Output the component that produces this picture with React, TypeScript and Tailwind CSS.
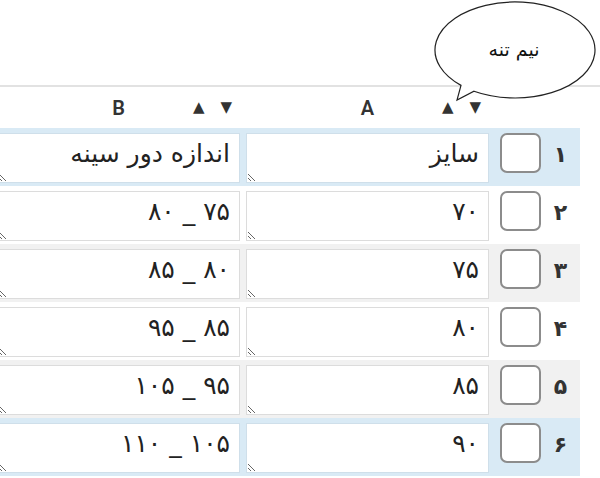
const rows = [
  { n: '۱', a: 'سایز', b: 'اندازه دور سینه', bg: 'bg-[#d9eaf5]', border: 'border-[#cfdfea]' },
  { n: '۲', a: '۷۰', b: '۷۵ _ ۸۰', bg: 'bg-white', border: 'border-[#dcdcdc]' },
  { n: '۳', a: '۷۵', b: '۸۰ _ ۸۵', bg: 'bg-[#f1f1f1]', border: 'border-[#dcdcdc]' },
  { n: '۴', a: '۸۰', b: '۸۵ _ ۹۵', bg: 'bg-white', border: 'border-[#dcdcdc]' },
  { n: '۵', a: '۸۵', b: '۹۵ _ ۱۰۵', bg: 'bg-[#f1f1f1]', border: 'border-[#dcdcdc]' },
  { n: '۶', a: '۹۰', b: '۱۰۵ _ ۱۱۰', bg: 'bg-[#d9eaf5]', border: 'border-[#cfdfea]' },
];

function Cell({ value, border }: { value: string; border: string }) {
  return (
    <div className="w-[249px] shrink-0 px-[3px] pt-[5px] pb-[3px]">
      <textarea
        readOnly
        dir="rtl"
        defaultValue={value}
        className={`block w-full h-[50px] bg-white border ${border} pt-[4px] pr-[9px] text-[25px] leading-[32px] text-[#222] overflow-hidden outline-none font-['DejaVu_Sans',sans-serif]`}
      />
    </div>
  );
}

function HeaderCell({ label }: { label: string }) {
  return (
    <div className="w-[249px] shrink-0 grid grid-cols-[1fr_auto_1fr] items-center">
      <span />
      <span className="text-[20px] leading-none font-semibold text-[#333] font-['Roboto',sans-serif]">{label}</span>
      <span className="flex justify-end gap-[16px] pr-[11px] text-[15px] leading-none text-[#333] font-['DejaVu_Sans',sans-serif]">
        <span>▲</span>
        <span>▼</span>
      </span>
    </div>
  );
}

export default function App() {
  return (
    <div className="relative w-[600px] h-[478px] bg-white overflow-hidden">
      {/* space above the table */}
      <div className="h-[85px]" />

      {/* column headers */}
      <div className="flex justify-end h-[43px] border-t-2 border-[#e2e2e2]">
        <HeaderCell label="B" />
        <HeaderCell label="A" />
        <div className="w-[88px] shrink-0" />
        <div className="w-[20px] shrink-0" />
      </div>

      {rows.map((r) => (
        <div key={r.n} className="flex justify-end h-[58px]">
          <div className={`flex ${r.bg}`}>
            <Cell value={r.b} border={r.border} />
            <Cell value={r.a} border={r.border} />
            <div className="w-[88px] shrink-0 flex items-start">
              <div className="ml-[8px] mt-[5px] w-[41px] h-[40px] rounded-[7px] border-2 border-[#8c8c8c] bg-white" />
              <span className="flex-1 text-center pt-[10px] text-[22px] font-bold text-[#333] font-['DejaVu_Sans',sans-serif]">
                {r.n}
              </span>
            </div>
          </div>
          <div className="w-[20px] shrink-0" />
        </div>
      ))}

      {/* speech bubble */}
      <svg className="absolute left-0 top-0 pointer-events-none" width="600" height="110">
        <path
          d="M461 85.4 A80 48 0 1 1 474 91.2 L457 100 Z"
          fill="white"
          stroke="#222"
          strokeWidth="1.2"
        />
        <text
          x="514"
          y="56"
          textAnchor="middle"
          direction="rtl"
          fontSize="19"
          fill="#111"
          fontFamily="DejaVu Sans, sans-serif"
        >
          نیم تنه
        </text>
      </svg>
    </div>
  );
}
